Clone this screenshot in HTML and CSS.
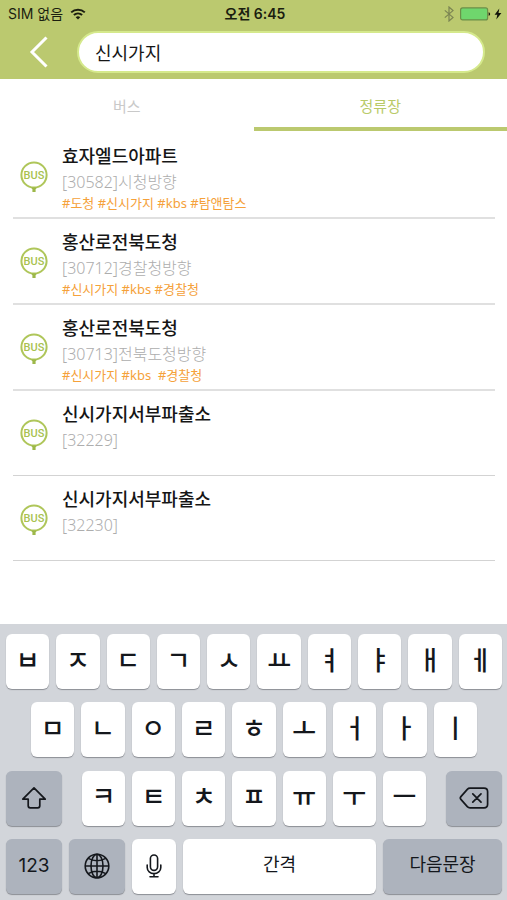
FILE: index.html
```html
<!DOCTYPE html>
<html lang="ko">
<head>
<meta charset="utf-8">
<meta name="viewport" content="width=device-width, initial-scale=1">
<title>정류장 검색</title>
<link rel="stylesheet" href="styles.css">
</head>
<body>
<svg class="defs" aria-hidden="true">
  <symbol id="bus" viewBox="0 0 28 32">
    <circle cx="14" cy="14" r="12.6" fill="none" stroke="#afc65a" stroke-width="2"/>
    <path d="M11 26.600h6l-1.400 1.600v2.800h-3.200v-2.800z" fill="#9db84a"/>
    <text class="bus-text" x="14" y="18" text-anchor="middle">BUS</text>
  </symbol>
</svg>
<header class="header">
  <div class="status">
    <div class="status-left">
      <span>SIM 없음</span>
      <svg width="16" height="12" viewBox="0 0 16 12" fill="none" stroke="#1b1e10" stroke-width="2"><path d="M1.2 4.4a9.8 9.8 0 0 1 13.6 0M3.9 7.1a6 6 0 0 1 8.2 0"/><path d="M8 11.6 5.7 9.3a3.3 3.3 0 0 1 4.6 0z" fill="#1b1e10" stroke="none"/></svg>
    </div>
    <span class="clock">오전 6:45</span>
    <div class="status-right">
      <svg width="10" height="16" viewBox="0 0 10 16" fill="none" stroke="#7b8452" stroke-width="1.2"><path d="M.8 4.4 9 11.4 5 15V1l4 3.6-8.2 7"/></svg>
      <svg width="31" height="14" viewBox="0 0 31 14"><rect x=".6" y=".9" width="27" height="12" rx="2" fill="#6fd66d" stroke="#6b8f48" stroke-width="1.2"/><path d="M28.6 5.2c2 .4 2 3.200 0 3.600z" fill="#1b1e10"/></svg>
      <svg width="8" height="12" viewBox="0 0 8 12"><path d="M5.300.5.600 6.700h2.700L2.300 11.500 7.400 5H4.500z" fill="#12140a"/></svg>
    </div>
  </div>
  <form class="search">
    <button class="back" type="button" aria-label="뒤로"><svg width="20" height="32" viewBox="0 0 20 32" fill="none" stroke="#fff" stroke-width="3"><path d="M17.500 1.500 3 16l14.500 14.500"/></svg></button>
    <input class="field" type="text" value="신시가지" aria-label="검색어">
  </form>
</header>
<nav class="tabs">
  <button class="tab" type="button">버스</button>
  <button class="tab active" type="button">정류장</button>
</nav>
<main class="results">
  <ul class="stops">
    <li class="stop thick"><svg class="bus"><use href="#bus"/></svg><div><h2>효자엘드아파트</h2><p class="info">[30582]시청방향</p><p class="tags">#도청 #신시가지 #kbs #탐앤탐스</p></div></li>
    <li class="stop thick"><svg class="bus"><use href="#bus"/></svg><div><h2>홍산로전북도청</h2><p class="info">[30712]경찰청방향</p><p class="tags">#신시가지 #kbs #경찰청</p></div></li>
    <li class="stop thick"><svg class="bus"><use href="#bus"/></svg><div><h2>홍산로전북도청</h2><p class="info">[30713]전북도청방향</p><p class="tags">#신시가지 #kbs&nbsp; #경찰청</p></div></li>
    <li class="stop"><svg class="bus"><use href="#bus"/></svg><div><h2>신시가지서부파출소</h2><p class="info">[32229]</p></div></li>
    <li class="stop"><svg class="bus"><use href="#bus"/></svg><div><h2>신시가지서부파출소</h2><p class="info">[32230]</p></div></li>
  </ul>
</main>
<section class="keyboard" aria-label="키보드">
  <div class="row">
    <button class="key">ㅂ</button><button class="key">ㅈ</button><button class="key">ㄷ</button><button class="key">ㄱ</button><button class="key">ㅅ</button><button class="key">ㅛ</button><button class="key">ㅕ</button><button class="key">ㅑ</button><button class="key">ㅐ</button><button class="key">ㅔ</button>
  </div>
  <div class="row inset">
    <button class="key">ㅁ</button><button class="key">ㄴ</button><button class="key">ㅇ</button><button class="key">ㄹ</button><button class="key">ㅎ</button><button class="key">ㅗ</button><button class="key">ㅓ</button><button class="key">ㅏ</button><button class="key">ㅣ</button>
  </div>
  <div class="row spread">
    <button class="key dark side icon" aria-label="shift"><svg width="26" height="24" viewBox="0 0 26 24" fill="none" stroke="#14171c" stroke-width="1.700" stroke-linejoin="round"><path d="M13 1.800 1.800 13.200h5.400v6.600q0 2 2 2h7.600q2 0 2-2v-6.600h5.400z"/></svg></button>
    <div class="row letters">
      <button class="key">ㅋ</button><button class="key">ㅌ</button><button class="key">ㅊ</button><button class="key">ㅍ</button><button class="key">ㅠ</button><button class="key">ㅜ</button><button class="key">ㅡ</button>
    </div>
    <button class="key dark side icon" aria-label="지우기"><svg width="30" height="22" viewBox="0 0 30 22" fill="none" stroke="#14171c" stroke-width="1.700" stroke-linejoin="round" stroke-linecap="round"><path d="M11 1.200h14q3.600 0 3.600 3.600v12.400q0 3.600-3.600 3.600H11q-1.600 0-2.700-1.200L1.900 12.400q-1.200-1.400 0-2.800l6.400-7.200Q9.400 1.200 11 1.200zM13.800 6.800l8.200 8.400M22 6.800l-8.200 8.400"/></svg></button>
  </div>
  <div class="row">
    <button class="key dark side word digits">123</button>
    <button class="key dark side icon" aria-label="언어"><svg width="26" height="26" viewBox="0 0 26 26" fill="none" stroke="#14171c" stroke-width="1.600"><circle cx="13" cy="13" r="11.800"/><ellipse cx="13" cy="13" rx="6" ry="11.800"/><path d="M13 1.200v23.600M1.200 13h23.600M4.200 5.400q8.800 4.600 17.600 0M4.200 20.600q8.800-4.600 17.600 0"/></svg></button>
    <button class="key mic icon" aria-label="음성 입력"><svg width="16" height="24" viewBox="0 0 16 24" fill="none" stroke="#14171c" stroke-width="1.600" stroke-linecap="round"><rect x="4.400" y="1" width="7.200" height="15.400" rx="3.600"/><path d="M1.200 11v2.400a6.800 6.200 0 0 0 13.600 0V11M8 19.600v3M4 22.800h8"/></svg></button>
    <button class="key word">간격</button>
    <button class="key dark next word">다음문장</button>
  </div>
</section>
</body>
</html>
```

FILE: styles.css
```css
* { box-sizing: border-box; }

body {
  margin: 0;
  min-height: 100vh;
  display: flex;
  flex-direction: column;
  background: #fff;
  color: #161616;
  font-family: "Noto Sans", "Noto Sans CJK KR", sans-serif;
}

button, input { font: inherit; color: inherit; border: 0; padding: 0; margin: 0; }
h2, p, ul { margin: 0; padding: 0; }
.defs { display: none; }
svg { display: block; flex: none; }

.header { background: #bbc96f; padding-bottom: 6px; }

.status {
  height: 28px;
  display: grid;
  grid-template-columns: 1fr auto 1fr;
  align-items: center;
  padding: 0 5px 0 8px;
  font: 14px/20px Inter, "Noto Sans CJK KR", sans-serif;
  color: #1b1e10;
}
.status-left { display: flex; align-items: center; gap: 7px; }
.status-right { display: flex; align-items: center; justify-content: flex-end; gap: 6px; }
.status-right svg:last-child { margin-left: -3px; }
.clock { font-weight: 600; }

.search { display: flex; align-items: center; margin: 3px 22px 0 29px; }
.back { width: 48px; height: 40px; background: none; display: flex; align-items: center; }
.field {
  flex: 1;
  min-width: 0;
  height: 42px;
  padding: 0 16px;
  border: 2px solid #d5e98c;
  border-radius: 21px;
  background: #fff;
  font-size: 18px;
}

.tabs { display: flex; }
.tab {
  flex: 1;
  height: 52px;
  padding-top: 4px;
  background: none;
  border-bottom: 4px solid transparent;
  font-size: 15px;
  color: #c9c9c9;
}
.active { color: #b9ca68; border-color: #bbc96f; }

.results { flex: 1; padding: 2px 12px 0 13px; }
.stops { list-style: none; }
.stop {
  display: flex;
  gap: 14px;
  height: 85px;
  padding: 10px 0 0 7px;
  border-bottom: 1px solid #d3d3d3;
}
.thick { height: 86px; border-bottom: 2px solid #e0e0e0; }
.bus { width: 28px; height: 32px; margin-top: 18px; }
.bus-text { font: 500 11px Roboto, sans-serif; fill: #a9c24f; }
.stop h2 { font-size: 18px; line-height: 26px; font-weight: 500; }
.info { font-size: 16px; line-height: 26px; font-weight: 300; color: #adadad; }
.tags { font-size: 13px; line-height: 16px; color: #f5a13a; }

.keyboard {
  height: 276px;
  padding: 10px 5px 6px 6px;
  display: flex;
  flex-direction: column;
  justify-content: space-between;
  background: #d2d5da;
}
.row { display: flex; gap: 7px; }
.inset { padding: 0 25px; }
.spread { gap: 20px; }
.letters { flex: 1; }
.key {
  flex: 1;
  min-width: 0;
  height: 55px;
  padding-bottom: 6px;
  display: flex;
  align-items: center;
  justify-content: center;
  border-radius: 6px;
  background: #fff;
  box-shadow: 0 1px 1px #8b8e94;
  font: 500 26px/32px "Noto Sans CJK KR", sans-serif;
  color: #14171c;
}
.dark { background: #adb3bd; }
.side { flex: 0 0 56px; }
.mic { flex: 0 0 44px; }
.next { flex: 0 0 119px; }
.icon { padding-bottom: 0; }
.word { padding-bottom: 2px; font: 18px/24px Inter, "Noto Sans CJK KR", sans-serif; }
.digits { padding-bottom: 0; font-size: 19px; }
```
